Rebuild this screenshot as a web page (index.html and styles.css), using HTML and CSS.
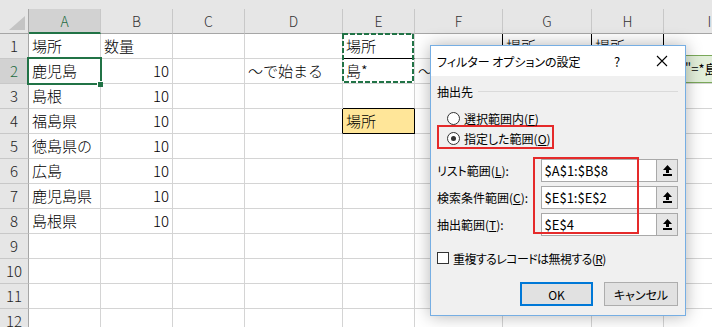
FILE: index.html
```html
<!DOCTYPE html>
<html lang="ja">
<head>
<meta charset="utf-8">
<title>フィルター オプションの設定</title>
<link rel="stylesheet" href="styles.css">
</head>
<body>
<div class="topband"></div>
<div class="sheet">
  <div class="corner"><span class="tri"></span></div>
  <div class="ch sel">A</div><div class="ch">B</div><div class="ch">C</div><div class="ch">D</div><div class="ch">E</div><div class="ch">F</div><div class="ch">G</div><div class="ch">H</div><div class="ch">I</div>

  <div class="rh">1</div><div class="c">場所</div><div class="c">数量</div><div class="c"></div><div class="c"></div><div class="c bb">場所</div><div class="c br"></div><div class="c br">場所</div><div class="c br">場所</div><div class="c"></div>
  <div class="rh sel">2</div><div class="c">鹿児島</div><div class="c num">10</div><div class="c"></div><div class="c">～で始まる</div><div class="c">島*</div><div class="c">～</div><div class="c"></div><div class="c"></div><div class="c"></div>
  <div class="rh">3</div><div class="c">島根</div><div class="c num">10</div><div class="c"></div><div class="c"></div><div class="c bb"></div><div class="c"></div><div class="c"></div><div class="c"></div><div class="c"></div>
  <div class="rh">4</div><div class="c">福島県</div><div class="c num">10</div><div class="c"></div><div class="c br"></div><div class="c hl">場所</div><div class="c"></div><div class="c"></div><div class="c"></div><div class="c"></div>
  <div class="rh">5</div><div class="c">徳島県の</div><div class="c num">10</div><div class="c"></div><div class="c"></div><div class="c"></div><div class="c"></div><div class="c"></div><div class="c"></div><div class="c"></div>
  <div class="rh">6</div><div class="c">広島</div><div class="c num">10</div><div class="c"></div><div class="c"></div><div class="c"></div><div class="c"></div><div class="c"></div><div class="c"></div><div class="c"></div>
  <div class="rh">7</div><div class="c">鹿児島県</div><div class="c num">10</div><div class="c"></div><div class="c"></div><div class="c"></div><div class="c"></div><div class="c"></div><div class="c"></div><div class="c"></div>
  <div class="rh">8</div><div class="c">島根県</div><div class="c num">10</div><div class="c"></div><div class="c"></div><div class="c"></div><div class="c"></div><div class="c"></div><div class="c"></div><div class="c"></div>
  <div class="rh">9</div><div class="c"></div><div class="c"></div><div class="c"></div><div class="c"></div><div class="c"></div><div class="c"></div><div class="c"></div><div class="c"></div><div class="c"></div>
  <div class="rh">10</div><div class="c"></div><div class="c"></div><div class="c"></div><div class="c"></div><div class="c"></div><div class="c"></div><div class="c"></div><div class="c"></div><div class="c"></div>
  <div class="rh">11</div><div class="c"></div><div class="c"></div><div class="c"></div><div class="c"></div><div class="c"></div><div class="c"></div><div class="c"></div><div class="c"></div><div class="c"></div>
  <div class="rh">12</div><div class="c"></div><div class="c"></div><div class="c"></div><div class="c"></div><div class="c"></div><div class="c"></div><div class="c"></div><div class="c"></div><div class="c"></div>
</div>

<div class="selbox"></div>
<div class="handle"></div>
<svg class="ants" width="80" height="56" viewBox="0 0 80 56"><rect x="3" y="2" width="70" height="48" fill="none" stroke="#217346" stroke-width="2" stroke-dasharray="5 2"/></svg>
<div class="shape">"=*島*"</div>

<div class="dialog">
  <div class="dlg-title">
    <span class="dlg-name">フィルター オプションの設定</span>
    <span class="help">?</span>
    <span class="close"><svg width="12" height="12" viewBox="0 0 12 12"><path d="M1 1 L11 11 M11 1 L1 11" stroke="#000" stroke-width="1.1" fill="none"/></svg></span>
  </div>
  <div class="dlg-body">
    <div class="grp"><span>抽出先</span><span class="grp-line"></span></div>
    <div class="radio"><span class="rb"></span><span>選択範囲内(<u>F</u>)</span></div>
    <div class="radio annot"><span class="rb on"></span><span>指定した範囲(<u>O</u>)</span></div>
    <div class="rng first"><span class="lbl">リスト範囲(<u>L</u>):</span><span class="fld">$A$1:$B$8</span><span class="pick"><svg width="9" height="11" viewBox="0 0 9 11"><path d="M4.5 0 L9 5 L6 5 L6 8 L3 8 L3 5 L0 5 Z M0 9 H9 V11 H0 Z" fill="#000"/></svg></span></div>
    <div class="rng"><span class="lbl">検索条件範囲(<u>C</u>):</span><span class="fld">$E$1:$E$2</span><span class="pick"><svg width="9" height="11" viewBox="0 0 9 11"><path d="M4.5 0 L9 5 L6 5 L6 8 L3 8 L3 5 L0 5 Z M0 9 H9 V11 H0 Z" fill="#000"/></svg></span></div>
    <div class="rng"><span class="lbl">抽出範囲(<u>T</u>):</span><span class="fld">$E$4</span><span class="pick"><svg width="9" height="11" viewBox="0 0 9 11"><path d="M4.5 0 L9 5 L6 5 L6 8 L3 8 L3 5 L0 5 Z M0 9 H9 V11 H0 Z" fill="#000"/></svg></span></div>
    <div class="chk"><span class="cb"></span><span class="chk-text">重複するレコードは無視する(<u>R</u>)</span></div>
    <div class="btns"><span class="btn ok">OK</span><span class="btn">キャンセル</span></div>
  </div>
  <div class="annot-box"></div>
</div>
</body>
</html>
```
FILE: styles.css
```css
html, body {
  margin: 0;
  padding: 0;
}
body {
  width: 712px;
  height: 327px;
  overflow: hidden;
  position: relative;
  background: #fff;
  font-family: "Noto Sans CJK JP", "Noto Sans", sans-serif;
  color: #000;
}
.topband {
  height: 9px;
  background: #e6e6e6;
}
.sheet {
  display: grid;
  grid-template-columns: 29px 72px 72px 72px 98px 72px 88px 89px 72px 92px;
  grid-auto-rows: 25px;
  width: 756px;
}
.sheet > div {
  box-sizing: border-box;
  white-space: nowrap;
  overflow: hidden;
}
.corner {
  background: #e6e6e6;
  border-right: 1px solid #a6a6a6;
  border-bottom: 1px solid #a6a6a6;
  position: relative;
}
.tri {
  position: absolute;
  right: 3px;
  bottom: 3px;
  width: 0;
  height: 0;
  border-left: 16px solid transparent;
  border-bottom: 14px solid #c4c4c4;
}
.ch {
  background: #e6e6e6;
  border-right: 1px solid #c8c8c8;
  border-bottom: 1px solid #a6a6a6;
  text-align: center;
  font-size: 14px;
  line-height: 24px;
  color: #333;
  font-weight: 300;
}
.ch.sel {
  background: #d2d2d2;
  color: #1e6b40;
  border-bottom: 2px solid #217346;
}
.rh {
  background: #e6e6e6;
  border-right: 1px solid #a6a6a6;
  border-bottom: 1px solid #c8c8c8;
  text-align: center;
  font-size: 15px;
  line-height: 24px;
  color: #222;
  font-weight: 300;
}
.rh.sel {
  background: #d2d2d2;
  color: #1e6b40;
}
.c {
  border-right: 1px solid #d4d4d4;
  border-bottom: 1px solid #d4d4d4;
  font-size: 15px;
  line-height: 24px;
  padding: 0 3px;
  font-weight: 300;
}
.c.num {
  text-align: right;
}
.c.bb {
  border-bottom-color: #000;
}
.c.br {
  border-right-color: #000;
}
.c.hl {
  background: #ffe699;
  border-right-color: #000;
  border-bottom-color: #000;
}
.selbox {
  position: absolute;
  left: 27px;
  top: 57px;
  width: 75px;
  height: 28px;
  box-sizing: border-box;
  border: 2px solid #217346;
}
.handle {
  position: absolute;
  left: 97px;
  top: 81px;
  width: 5px;
  height: 5px;
  background: #217346;
  border-left: 1px solid #fff;
  border-top: 1px solid #fff;
}
.ants {
  position: absolute;
  left: 340px;
  top: 32px;
}
.shape {
  position: absolute;
  left: 672px;
  top: 55px;
  width: 70px;
  height: 28px;
  box-sizing: border-box;
  background: #e2efda;
  border: 1px solid #7aa85a;
  padding-left: 12px;
  font-size: 13px;
  line-height: 26px;
  white-space: nowrap;
}
.dialog {
  position: absolute;
  left: 430px;
  top: 45px;
  width: 256px;
  height: 271px;
  box-sizing: border-box;
  border: 1px solid #76aee3;
  background: #f0f0f0;
  box-shadow: 0 0 16px rgba(0, 0, 0, 0.3);
  font-size: 12px;
  font-feature-settings: "palt";
}
.dlg-title {
  height: 30px;
  background: #fff;
  display: flex;
  align-items: center;
  padding-left: 6px;
}
.dlg-name {
  flex: 1;
  white-space: nowrap;
}
.help {
  width: 20px;
  text-align: center;
  font-size: 13px;
  margin-right: 12px;
}
.close {
  width: 46px;
  height: 30px;
  display: flex;
  align-items: center;
  justify-content: center;
}
.dlg-body {
  padding: 0 7px 0 6px;
}
.grp {
  display: flex;
  align-items: center;
  height: 16px;
  margin-top: 7px;
}
.grp-line {
  flex: 1;
  height: 1px;
  background: #dadada;
  margin-left: 5px;
}
.radio {
  display: flex;
  align-items: center;
  gap: 4px;
  height: 18px;
  margin-top: 10px;
  padding-left: 10px;
  white-space: nowrap;
}
.radio.annot {
  width: fit-content;
  height: 24px;
  margin-top: -2px;
  box-sizing: border-box;
  border: 2px solid #e52a2a;
  padding: 2px 1px 0 8px;
}
.rb {
  width: 13px;
  height: 13px;
  box-sizing: border-box;
  border: 1px solid #333;
  border-radius: 50%;
  background: #fff;
  position: relative;
  flex: none;
}
.rb.on::after {
  content: "";
  position: absolute;
  left: 3px;
  top: 3px;
  width: 5px;
  height: 5px;
  border-radius: 50%;
  background: #333;
}
.rng {
  display: flex;
  align-items: center;
  height: 23px;
  margin-top: 4px;
}
.rng.first {
  margin-top: 10px;
}
.lbl {
  width: 104px;
  white-space: nowrap;
}
.fld {
  width: 117px;
  height: 23px;
  box-sizing: border-box;
  border: 1px solid #a9a9a9;
  background: #fff;
  padding-left: 3px;
  line-height: 21px;
  font-size: 13px;
}
.pick {
  width: 21px;
  height: 23px;
  box-sizing: border-box;
  border: 1px solid #a9a9a9;
  border-left: none;
  background: #e5e5e5;
  display: flex;
  align-items: center;
  justify-content: center;
}
.chk {
  display: flex;
  align-items: center;
  gap: 4px;
  height: 18px;
  margin-top: 13px;
  white-space: nowrap;
}
.chk-text {
  letter-spacing: -0.6px;
}
.cb {
  width: 12px;
  height: 12px;
  box-sizing: border-box;
  border: 1px solid #333;
  background: #fff;
  flex: none;
}
.btns {
  display: flex;
  justify-content: flex-end;
  gap: 11px;
  margin-top: 15px;
}
.btn {
  width: 74px;
  height: 24px;
  box-sizing: border-box;
  border: 1px solid #adadad;
  background: #e1e1e1;
  display: flex;
  align-items: center;
  justify-content: center;
}
.btn.ok {
  width: 73px;
  border: 2px solid #0078d7;
}
.annot-box {
  position: absolute;
  left: 102px;
  top: 111px;
  width: 106px;
  height: 77px;
  box-sizing: border-box;
  border: 2px solid #e52a2a;
}
```
